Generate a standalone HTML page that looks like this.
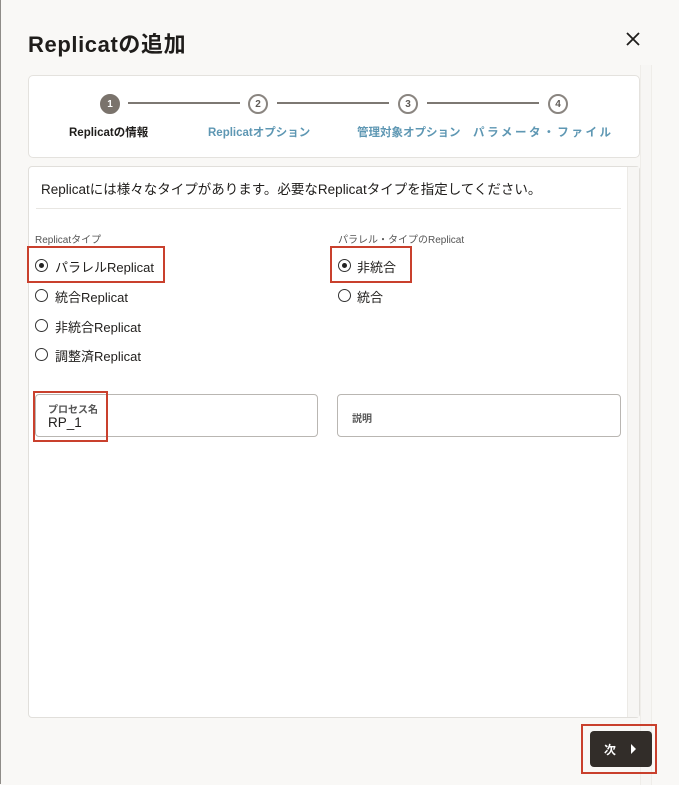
<!DOCTYPE html>
<html><head><meta charset="utf-8"><style>
*{box-sizing:border-box;margin:0;padding:0}
body{width:679px;height:784px;background:#f9f8f6;position:relative;overflow:hidden;font-family:"Liberation Sans","Noto Sans CJK JP",sans-serif;color:#1f1d1b}
.a{position:absolute}
.lb{border-left:1px solid #8f8c88}
.title{left:28px;top:27px;font-size:22px;font-weight:bold;letter-spacing:0.6px}
.p1{left:28px;top:75px;width:612px;height:83px;background:#fff;border:1px solid #e4e2de;border-radius:5px}
.strip{left:640px;top:65px;width:12px;height:720px;background:#f7f6f4;border-left:1px solid #efede9;border-right:1px solid #efede9}
.p2{left:28px;top:166px;width:612px;height:552px;background:#fff;border:1px solid #e1dfdb;border-radius:4px}
.sb{left:627px;top:167px;width:12px;height:550px;background:#f7f6f4;border-left:1px solid #eceae6}
.c{width:20px;height:20px;border-radius:50%;border:2px solid #8a8580;font-size:10px;font-weight:bold;text-align:center;line-height:17px;color:#5e5a56;background:#fff}
.c1{background:#7a736c;border-color:#7a736c;color:#fff}
.ln{height:2px;background:#7d7873;top:102px}
.st{font-size:11.5px;font-weight:bold;top:124px;color:#5e97b3}
.r{width:13px;height:13px;border-radius:50%;border:1.5px solid #333}
.r.on::after{content:"";position:absolute;left:2.5px;top:2.5px;width:5px;height:5px;border-radius:50%;background:#222}
.lbl{font-size:13px}
.red{border:2px solid #c9402d}
.inp{border:1px solid #b9b6b2;border-radius:4px;background:#fff}
</style></head><body>
<div class="a lb" style="left:0;top:0;width:1px;height:784px"></div>
<div class="a title">Replicatの追加</div>
<svg class="a" style="left:626px;top:32px" width="14" height="14" viewBox="0 0 14 14"><path d="M1 1L13 13M13 1L1 13" stroke="#1f1d1b" stroke-width="1.8"/></svg>
<div class="a strip"></div>
<div class="a p1"></div>
<div class="a c c1" style="left:100px;top:94px">1</div>
<div class="a ln" style="left:128px;width:112px"></div>
<div class="a c" style="left:248px;top:94px">2</div>
<div class="a ln" style="left:277px;width:112px"></div>
<div class="a c" style="left:398px;top:94px">3</div>
<div class="a ln" style="left:427px;width:112px"></div>
<div class="a c" style="left:548px;top:94px">4</div>
<div class="a st" style="left:69px;color:#1f1d1b">Replicatの情報</div>
<div class="a st" style="left:208px">Replicatオプション</div>
<div class="a st" style="left:357px">管理対象オプション</div>
<div class="a st" style="left:473px;letter-spacing:2.6px">パラメータ・ファイル</div>
<div class="a p2"></div>
<div class="a sb"></div>
<div class="a" style="left:41px;top:178px;font-size:13.5px">Replicatには様々なタイプがあります。必要なReplicatタイプを指定してください。</div>
<div class="a" style="left:36px;top:208px;width:585px;height:1px;background:#e8e6e2"></div>
<div class="a" style="left:35px;top:231px;font-size:10px;color:#555">Replicatタイプ</div>
<div class="a" style="left:338px;top:231px;font-size:10px;color:#555">パラレル・タイプのReplicat</div>
<div class="a red" style="left:27px;top:246px;width:138px;height:37px"></div>
<div class="a r on" style="left:35px;top:259px"></div><div class="a lbl" style="left:55px;top:257px">パラレルReplicat</div>
<div class="a r" style="left:35px;top:289px"></div><div class="a lbl" style="left:55px;top:287px">統合Replicat</div>
<div class="a r" style="left:35px;top:319px"></div><div class="a lbl" style="left:55px;top:317px">非統合Replicat</div>
<div class="a r" style="left:35px;top:348px"></div><div class="a lbl" style="left:55px;top:346px">調整済Replicat</div>
<div class="a red" style="left:330px;top:246px;width:82px;height:37px"></div>
<div class="a r on" style="left:338px;top:259px"></div><div class="a lbl" style="left:357px;top:257px">非統合</div>
<div class="a r" style="left:338px;top:289px"></div><div class="a lbl" style="left:357px;top:287px">統合</div>
<div class="a inp" style="left:35px;top:394px;width:283px;height:43px"></div>
<div class="a inp" style="left:337px;top:394px;width:284px;height:43px"></div>
<div class="a red" style="left:33px;top:391px;width:75px;height:51px"></div>
<div class="a" style="left:48px;top:401px;font-size:10px;color:#555;font-weight:bold">プロセス名</div>
<div class="a" style="left:48px;top:415px;font-size:13.5px">RP_1</div>
<div class="a" style="left:352px;top:410px;font-size:10px;color:#555;font-weight:bold">説明</div>
<div class="a red" style="left:581px;top:724px;width:76px;height:50px"></div>
<div class="a" style="left:590px;top:731px;width:62px;height:36px;background:#322d29;border-radius:4px;color:#fff;font-size:12px;font-weight:bold">
<span class="a" style="left:14px;top:10px">次</span>
<span class="a" style="left:41px;top:13px;width:0;height:0;border-left:5px solid #fff;border-top:5px solid transparent;border-bottom:5px solid transparent"></span>
</div>
</body></html>
